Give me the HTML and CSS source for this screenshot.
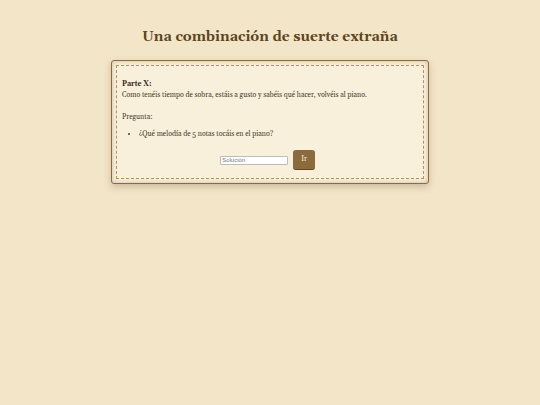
FILE: index.html
```html
<!DOCTYPE html>
<html lang="es">
<head>
    <meta charset="UTF-8">
    <meta name="viewport" content="width=device-width, initial-scale=1">
    <title>Una combinación de suerte extraña</title>
    <link rel="stylesheet" href="styles.css">
</head>
<body>
    <h1>Una combinación de suerte extraña</h1>
    <main class="container">
        <div class="content">
            <p class="part"><strong>Parte X:</strong><br>
            Como tenéis tiempo de sobra, estáis a gusto y sabéis qué hacer, volvéis al piano.</p>
            <p>Pregunta:</p>
            <ul>
                <li>¿Qué melodía de 5 notas tocáis en el piano?</li>
            </ul>
            <form class="answer">
                <input type="text" id="solution" placeholder="Solución" aria-label="Solución">
                <button type="submit">Ir</button>
            </form>
        </div>
    </main>
</body>
</html>
```

FILE: styles.css
```css
* {
    box-sizing: border-box;
}
body {
    margin: 0;
    padding: 27px 20px;
    background: #f3e5c8;
    color: #4a3c28;
    font-family: Georgia, Gelasio, "Liberation Serif", serif;
    font-size: 7px;
    line-height: 11px;
}
h1 {
    margin: 0 0 13px;
    color: #5c4520;
    font-size: 14px;
    line-height: 20px;
    text-align: center;
}
.container {
    max-width: 318px;
    margin: 0 auto;
    padding: 4px;
    background: #f9f0dc;
    border: 1px solid #8b6b3e;
    border-radius: 3px;
    box-shadow: 0 3px 7px rgba(92, 69, 32, 0.25), inset 0 0 5px rgba(139, 107, 62, 0.4);
}
.content {
    padding: 13px 5px 8px;
    background: #f9f0dc;
    border: 1px dashed #b3935c;
}
p {
    margin: 0;
}
strong {
    color: #33261a;
}
.part {
    margin-bottom: 11px;
}
ul {
    margin: 6px 0 10px;
    padding-left: 17px;
}
.answer {
    display: flex;
    justify-content: center;
    align-items: center;
    gap: 5px;
    padding-right: 5px;
}
.answer input {
    width: 68px;
    height: 9px;
    padding: 0 1px;
    background: #fff;
    border: 1px solid #bbb;
    border-radius: 1px;
    font-family: "Liberation Sans", sans-serif;
    font-size: 6px;
}
.answer button {
    padding: 4px 8px;
    background: #8b6b3e;
    color: #f9f0dc;
    border: none;
    border-bottom: 1px solid #5c4520;
    border-radius: 3px;
    font-family: inherit;
    font-size: 7px;
    line-height: 11px;
    cursor: pointer;
}
```
